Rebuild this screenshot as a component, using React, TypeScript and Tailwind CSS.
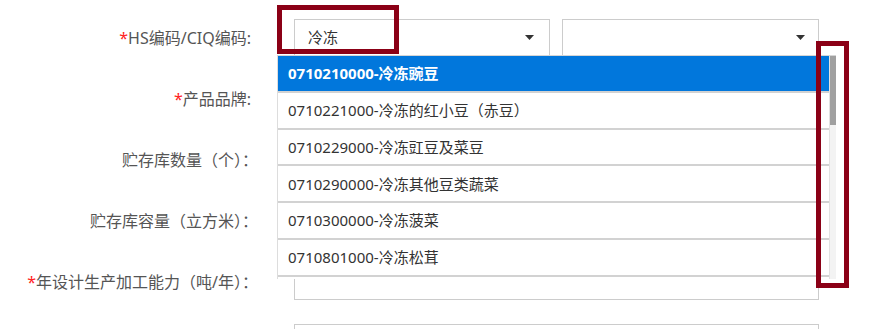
import React from 'react';

const font = { fontFamily: '"Noto Sans", "Noto Sans CJK SC", sans-serif' };

const options = [
  '0710210000-冷冻豌豆',
  '0710221000-冷冻的红小豆（赤豆）',
  '0710229000-冷冻豇豆及菜豆',
  '0710290000-冷冻其他豆类蔬菜',
  '0710300000-冷冻菠菜',
  '0710801000-冷冻松茸',
];

const Caret = () => (
  <svg width="9" height="5" viewBox="0 0 9 5" className="shrink-0">
    <polygon points="0,0 9,0 4.5,5" fill="#333" />
  </svg>
);

// labels ending in a full-width colon sit a few px further right
const Label = ({ text, required, wide }: { text: string; required?: boolean; wide?: boolean }) => (
  <div className={wide ? 'w-[258px] mr-[-2px] shrink-0 text-right text-[16px] text-[#555] whitespace-nowrap' : 'w-[251px] mr-[5px] shrink-0 text-right text-[16px] text-[#555] whitespace-nowrap'}>
    {required && <span className="text-[#f22]">*</span>}
    {text}
  </div>
);

const TextInput = () => <div className="w-[525px] h-[37px] border border-[#ccc] bg-white" />;

const App = () => {
  return (
    <div className="relative w-[875px] h-[329px] overflow-hidden bg-white" style={font}>
      <div className="flex flex-col gap-[24px] pt-[19px]">
        <div className="flex items-center h-[37px]">
          <Label text="HS编码/CIQ编码:" required />
          <div className="ml-[38px] flex gap-[12px]">
            <div className="w-[256px] h-[37px] border border-[#ccc] flex items-center justify-between pl-[13px] pr-[15px] text-[15px] text-[#333]">
              <span>冷冻</span>
              <Caret />
            </div>
            <div className="w-[257px] h-[37px] border border-[#ccc] flex items-center justify-end pr-[13px]">
              <Caret />
            </div>
          </div>
        </div>
        <div className="flex items-center h-[37px]">
          <Label text="产品品牌:" required />
          <div className="ml-[38px]"><TextInput /></div>
        </div>
        <div className="flex items-center h-[37px]">
          <Label text="贮存库数量（个）：" wide />
          <div className="ml-[38px]"><TextInput /></div>
        </div>
        <div className="flex items-center h-[37px]">
          <Label text="贮存库容量（立方米）：" wide />
          <div className="ml-[38px]"><TextInput /></div>
        </div>
        <div className="flex items-center h-[37px]">
          <Label text="年设计生产加工能力（吨/年）：" required wide />
          <div className="ml-[38px]"><TextInput /></div>
        </div>
        <div className="flex items-center h-[37px]">
          <Label text="" />
          <div className="ml-[38px]"><TextInput /></div>
        </div>
      </div>

      {/* dropdown list */}
      <div className="absolute left-[277px] top-[55px] w-[559px] h-[224px] flex bg-white overflow-hidden border-t border-[#d6d6d6]">
        <div className="flex-1 border-l border-[#ddd] overflow-hidden">
          {options.map((o, i) => (
            <div
              key={o}
              className={
                i === 0
                  ? 'h-[36.8px] flex items-center pl-[10px] text-[15px] font-bold text-white bg-[#0177dc] border-b-2 border-[#d2d2d2]'
                  : 'h-[36.8px] flex items-center pl-[10px] text-[15px] text-[#333] bg-white border-b-2 border-[#d2d2d2]'
              }
            >
              {o}
            </div>
          ))}
        </div>
        <div className="w-[7px] h-full bg-[#f3f3f3] border-l border-[#e2e2e2]">
          <div className="h-[69px] bg-[#a0a0a0]" />
        </div>
      </div>

      {/* annotation boxes */}
      <div className="absolute left-[277px] top-[5px] w-[122px] h-[49px] border-[5px] border-[#8b0016]" />
      <div className="absolute left-[816px] top-[41px] w-[33px] h-[247px] border-[5px] border-[#8b0016]" />
    </div>
  );
};

export default App;
